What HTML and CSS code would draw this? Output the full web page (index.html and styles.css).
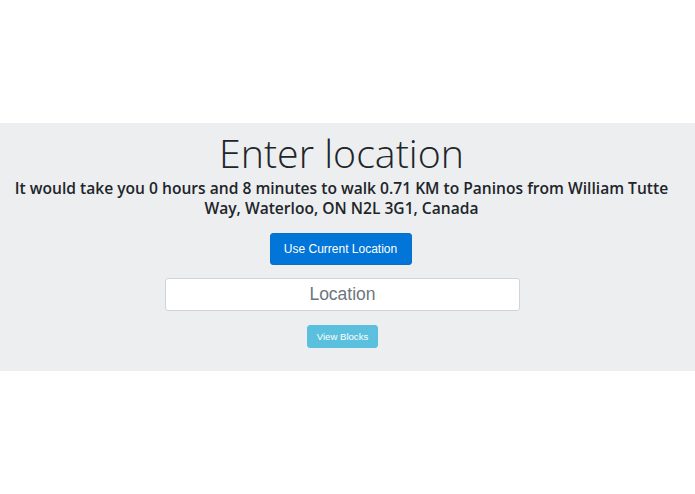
FILE: index.html
```html
<!DOCTYPE html>
<html>
<head>
<meta charset="utf-8">
<link rel="stylesheet" href="styles.css">
</head>
<body>
<div class="page">
  <section class="jumbotron">
    <h1 class="title">Enter location</h1>
    <h5 class="info">It would take you 0 hours and 8 minutes to walk 0.71 KM to Paninos from William Tutte Way, Waterloo, ON N2L 3G1, Canada</h5>
    <button class="btn-primary" type="button">Use Current Location</button>
    <input class="location" type="text" placeholder="Location">
    <button class="btn-info" type="button">View Blocks</button>
  </section>
</div>
</body>
</html>
```
FILE: styles.css
```css
html, body {
  margin: 0;
  padding: 0;
  background: #fff;
}
.page {
  padding-top: 123px;
}
.jumbotron {
  background: #eceef0;
  height: 248px;
  box-sizing: border-box;
  padding: 5px 12px 0 0;
  display: flex;
  flex-direction: column;
  align-items: center;
}
.title {
  margin: 0;
  font-family: "Open Sans", sans-serif;
  font-weight: 300;
  font-size: 39.3px;
  line-height: 50px;
  color: #212529;
}
.info {
  margin: 0;
  font-family: "Open Sans", sans-serif;
  font-weight: 600;
  font-size: 15.6px;
  line-height: 20px;
  color: #212529;
  text-align: center;
}
.btn-primary {
  margin: 15px 2px 0 0;
  width: 142px;
  height: 32px;
  background: #0275d8;
  border: 1px solid #0a6fc8;
  border-radius: 3px;
  color: #fff;
  font-family: "Liberation Sans", Arial, sans-serif;
  font-size: 12px;
  padding: 0;
}
.location {
  margin: 13px 0 0 2px;
  width: 355px;
  height: 33px;
  box-sizing: border-box;
  border: 1px solid #ced4da;
  border-radius: 3px;
  background: #fff;
  text-align: center;
  font-family: "Liberation Sans", Arial, sans-serif;
  font-size: 17.5px;
}
.location::placeholder {
  color: #6c757d;
}
.btn-info {
  margin: 14px 0 0 2px;
  width: 71px;
  height: 23px;
  background: #5bc0de;
  border: 1px solid #5bc0de;
  border-radius: 3px;
  color: #fff;
  font-family: "Liberation Sans", Arial, sans-serif;
  font-size: 9.6px;
  padding: 0;
}
```
